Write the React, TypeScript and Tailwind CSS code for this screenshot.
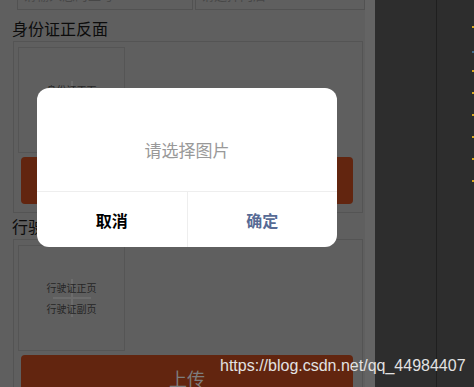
import React from 'react';

const cjk = "font-['Noto_Sans_CJK_SC',sans-serif]";

const Plus: React.FC = () => (
  <div className="absolute inset-0 flex items-center justify-center pointer-events-none">
    <div className="relative w-[38px] h-[38px]">
      <div className="absolute left-0 right-0 top-[18px] h-[2px] bg-[#6c6c6c]" />
      <div className="absolute top-0 bottom-0 left-[18px] w-[2px] bg-[#6c6c6c]" />
    </div>
  </div>
);

const UploadCard: React.FC<{ lines: string[]; short?: boolean }> = ({ lines, short }) => (
  <div className={`ml-[13px] w-[350px] border border-[#545454] pt-[5px] pl-[4px] ${short ? 'pb-[8px]' : 'pb-0'}`}>
    <div className="relative w-[107px] h-[106px] border border-[#555555] flex flex-col items-center justify-center">
      <Plus />
      {lines.map((l) => (
        <div key={l} className="relative text-[10px] leading-[21px] text-[#262626]">
          {l}
        </div>
      ))}
    </div>
    <div className="mt-[4px] ml-[3px] w-[332px] h-[47px] rounded-[4px] bg-[#62250f] flex items-center justify-center text-[18px] text-[#7d7d7d]">
      上传
    </div>
  </div>
);

export default function App() {
  const dots = [26, 70, 92, 114, 136, 158, 180];
  return (
    <div className={`w-[474px] h-[387px] flex overflow-hidden relative ${cjk}`}>
      {/* phone page, dimmed by mask */}
      <div className="w-[375px] h-full bg-[#5f5f5f] flex overflow-hidden">
        <div className="w-[365px] flex flex-col -mt-[22px]">
          <div className="flex pl-[17px] gap-[2px]">
            <div className="w-[177px] h-[32px] border border-[#525252] px-[5px] pt-[8px] text-[13px] leading-[16px] text-[#474747]">
              请输入您的工号
            </div>
            <div className="w-[171px] h-[32px] border border-[#525252] px-[5px] pt-[8px] text-[13px] leading-[16px] text-[#474747]">
              请选择门店
            </div>
          </div>
          <div className="ml-[12px] mt-[7px] text-[16px] leading-[22px] text-[#0c0c0c]">身份证正反面</div>
          <div className="mt-[2px]">
            <UploadCard lines={['身份证正面', '身份证反面']} short />
          </div>
          <div className="ml-[12px] mt-[2px] text-[16px] leading-[22px] text-[#0c0c0c]">行驶证正副页</div>
          <div className="mt-[2px]">
            <UploadCard lines={['行驶证正页', '行驶证副页']} />
          </div>
        </div>
        <div className="flex-1 bg-[#646464]" />
      </div>

      {/* IDE side */}
      <div className="w-[62px] h-full bg-[#2d2d2d] border-r border-[#1f1f1f]" />
      <div className="flex-1 h-full bg-[#2d2d2d] relative">
        {dots.map((y) => (
          <span key={y} className="absolute right-0 w-[2px] h-[2px] bg-[#d6a520]" style={{ top: y }} />
        ))}
        <span className="absolute right-0 top-[51px] w-[2px] h-[2px] bg-[#3f6a8a]" />
      </div>

      {/* modal */}
      <div className="absolute left-[37px] top-[88px] w-[300px] h-[159px] bg-white rounded-[12px] flex flex-col overflow-hidden">
        <div className="h-[103px] pt-[50px] text-center text-[17px] leading-[24px] text-[#999999]">请选择图片</div>
        <div className="flex-1 flex border-t border-[#eeeeee]">
          <div className="flex-1 flex items-center justify-center text-[16px] font-bold text-black">取消</div>
          <div className="flex-1 flex items-center justify-center text-[16px] font-bold text-[#576b95] border-l border-[#eeeeee]">
            确定
          </div>
        </div>
      </div>

      {/* watermark */}
      <div className="absolute left-[220px] top-[355px] text-[16px] leading-[22px] text-[#e2e2e2] font-['Liberation_Sans',sans-serif]">
        https://blog.csdn.net/qq_44984407
      </div>
    </div>
  );
}
